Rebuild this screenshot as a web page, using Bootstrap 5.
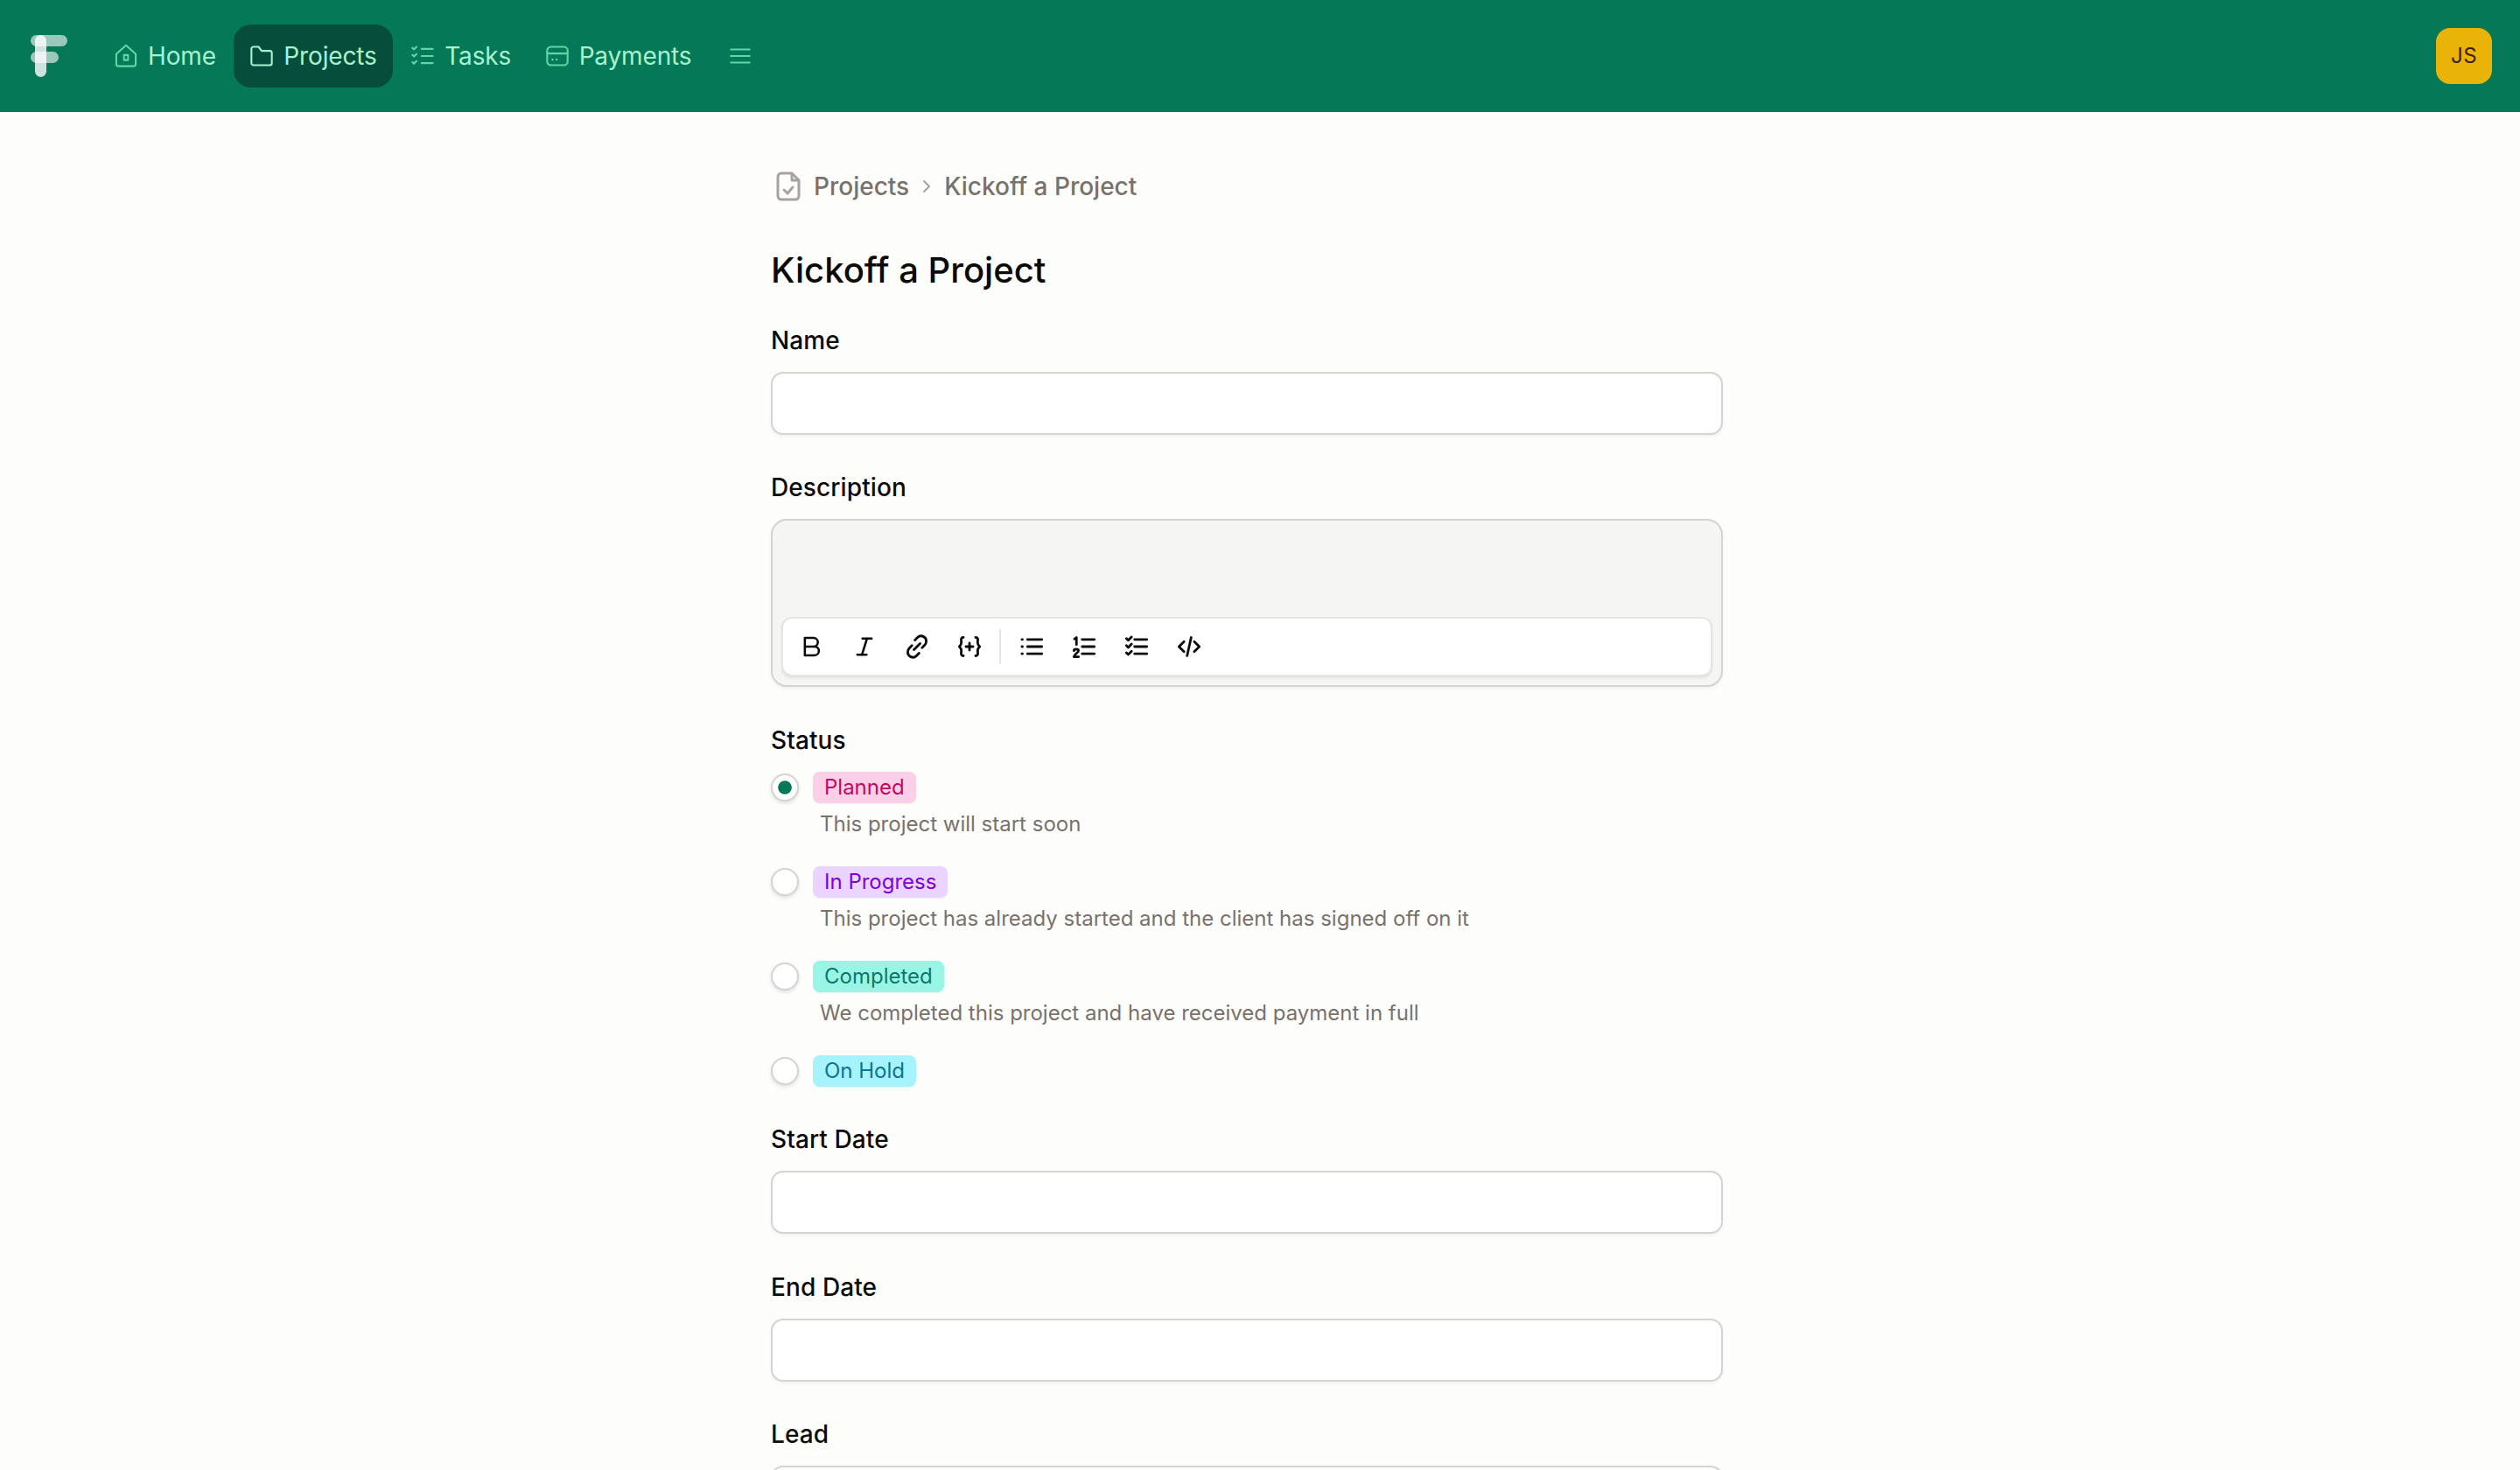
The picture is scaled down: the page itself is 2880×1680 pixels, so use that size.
<!DOCTYPE html>
<html lang="en">
<head>
<meta charset="utf-8">
<title>Kickoff a Project</title>
<link href="https://cdn.jsdelivr.net/npm/bootstrap@5.3.0/dist/css/bootstrap.min.css" rel="stylesheet">
<style>
html,body{height:1680px;overflow:hidden}
body{background:#fdfdfc;color:#0c0a09;font-family:Inter,"Liberation Sans",sans-serif;font-size:28px}
svg{display:block;flex:none;fill:none;stroke:currentColor;stroke-linecap:round;stroke-linejoin:round}
.top-bar{height:128px;background:#047857;padding:0 32px 0 35px}
.logo-mark{width:42px;height:48px;position:relative;margin-right:35px}
.logo-mark i{position:absolute;display:block;background:#fff;border-radius:7px}
.logo-a{left:0;top:0;width:42px;height:13px;opacity:.6}
.logo-b{left:0;top:19px;width:32px;height:13px;opacity:.6}
.logo-c{left:5px;top:0;width:13px;height:48px;opacity:.8}
.main-links{gap:2.5px}
.main-links .nav-link{height:72px;padding:0 18px;display:flex;align-items:center;gap:11px;color:#a7f3d0;font-size:28px;font-weight:400;border-radius:20px;letter-spacing:-.15px}
.main-links .nav-link svg{color:#6ee7b7;opacity:.85;width:28px;height:28px;stroke-width:1.8}
.main-links .nav-link.active{background:#064e3b;color:#a7f3d0}
.main-links .nav-link.active svg{color:#a7f3d0;opacity:1}
.menu-toggle{background:none;border:0;padding:0;margin-left:25px;color:#6ee7b7;opacity:.85}
.user-tile{width:64px;height:64px;background:#eab308;color:#422006;border-radius:16px;font-size:24px;letter-spacing:.5px}
.page-col{padding-right:30px}
.form-col{width:1088px;margin:0 auto;padding-top:65px}
.crumbs{height:40px;color:#78716c;margin-bottom:48px;font-size:28px;font-weight:450;padding-left:6px}
.crumbs .doc-ic{color:#a8a29e;margin-right:15px}
.crumbs .sep-ic{color:#a8a29e;margin:0 11px}
.page-title{font-size:40px;line-height:56px;font-weight:450;margin:0 0 32px}
.field-label{display:block;font-size:28px;line-height:40px;font-weight:450;margin:0 0 16px;letter-spacing:.1px}
.field-block{margin-bottom:40px}
.field-block.extra-gap{margin-bottom:41px}
.form-control.text-box{height:72px;border:2px solid #d6d3d1;border-radius:14px;background:#fff;box-shadow:0 2px 4px rgba(12,10,9,.05)}
.rich-box{height:192px;background:#f5f5f4;border:2px solid #d6d3d1;border-radius:18px;padding:0 10px 10px;display:flex;flex-direction:column;justify-content:flex-end;box-shadow:0 2px 4px rgba(12,10,9,.05)}
.tool-strip{height:68px;background:#fff;border:2px solid #e7e5e4;border-radius:12px;padding:0 0 0 3px;box-shadow:0 2px 3px rgba(12,10,9,.08);color:#0c0a09}
.tool-btn{width:60px;height:40px;padding:0;border:0;background:none;color:inherit;display:flex;align-items:center;justify-content:center}
.tool-sep{width:2px;height:40px;background:#e7e5e4;margin:0 5px 0 4px}
.status-row{display:flex;gap:16px;margin-bottom:28px}
.status-row:last-child{margin-bottom:0}
.status-row .form-check-input{width:32px;height:32px;margin:2px 0 0;flex:none;border:2px solid #d6d3d1;background-color:#fff;box-shadow:0 2px 4px rgba(12,10,9,.12)}
.status-row .form-check-input:checked{background-color:#fff;border-color:#d6d3d1;background-size:34px;background-position:center;background-image:url("data:image/svg+xml,%3csvg xmlns='http://www.w3.org/2000/svg' viewBox='-4 -4 8 8'%3e%3ccircle r='1.85' fill='%23047857'/%3e%3c/svg%3e")}
.status-tag{height:36px;line-height:36px;padding:0 13px;border-radius:8px;font-size:24px;font-weight:400;box-shadow:0 1px 2px rgba(12,10,9,.05)}
.tag-pink{background:#fbcfe8;color:#be0a62}
.tag-purple{background:#e9d5ff;color:#7e00d8}
.tag-teal{background:#99f6e4;color:#0f766e}
.tag-cyan{background:#a5f3fc;color:#0e7490}
.status-note{font-size:24px;line-height:40px;color:#78716c;margin:4px 0 0 8px}
</style>
</head>
<body>
<nav class="top-bar navbar d-flex align-items-center flex-nowrap">
  <div class="d-flex align-items-center">
    <div class="logo-mark"><i class="logo-a"></i><i class="logo-b"></i><i class="logo-c"></i></div>
    <ul class="nav main-links align-items-center">
      <li class="nav-item"><a class="nav-link" href="#"><svg viewBox="0 0 24 24"><path d="M12 1.500 2.500 10v10a2 2 0 0 0 2 2h15a2 2 0 0 0 2-2V10Z"/><rect x="10" y="11" width="4" height="5"/></svg>Home</a></li>
      <li class="nav-item"><a class="nav-link active" href="#"><svg viewBox="0 0 24 24"><path d="M2 19V5a2 2 0 0 1 2-2h5l3 4h8a2 2 0 0 1 2 2v10a2 2 0 0 1-2 2H4a2 2 0 0 1-2-2Z"/></svg>Projects</a></li>
      <li class="nav-item"><a class="nav-link" href="#"><svg viewBox="0 0 24 24"><path d="M11 5h11M11 12h11M11 19h11M2 4l1.500 1.500L6 3M2 11l1.500 1.500L6 10M2 18l1.500 1.500L6 17"/></svg>Tasks</a></li>
      <li class="nav-item"><a class="nav-link" href="#"><svg viewBox="0 0 24 24"><rect x="2" y="3" width="20" height="18" rx="3.500"/><path d="M2 9.500h20M7 15.500h.5M11 15.500h.5"/></svg>Payments</a></li>
    </ul>
    <button class="menu-toggle" type="button" aria-label="Menu"><svg width="26" height="26" viewBox="0 0 24 24" stroke-width="1.800"><path d="M2 5h20M2 12h20M2 19h20"/></svg></button>
  </div>
  <div class="user-tile d-flex align-items-center justify-content-center">JS</div>
</nav>
<div class="page-col">
  <main class="form-col">
    <div class="crumbs d-flex align-items-center">
      <svg class="doc-ic" width="28" height="34" viewBox="0 0 28 34" stroke-width="3"><path d="M18 2H6a4 4 0 0 0-4 4v22a4 4 0 0 0 4 4h16a4 4 0 0 0 4-4V10Z"/><path d="M18 3v7h7M9 21l4 4 6-7"/></svg>
      <span>Projects</span>
      <svg class="sep-ic" width="18" height="18" viewBox="0 0 18 18" stroke-width="2"><path d="m6 3 6 6-6 6"/></svg>
      <span>Kickoff a Project</span>
    </div>
    <h1 class="page-title">Kickoff a Project</h1>
    <div class="field-block">
      <label class="field-label" for="fName">Name</label>
      <input class="form-control text-box" id="fName" type="text">
    </div>
    <div class="field-block extra-gap">
      <label class="field-label">Description</label>
      <div class="rich-box">
        <div class="tool-strip d-flex align-items-center">
          <button class="tool-btn" type="button" aria-label="Bold"><svg width="28" height="28" viewBox="0 0 24 24" stroke-width="2.200"><path d="M5 3.500h8.500a4.250 4.250 0 0 1 0 8.500H5ZM5 12h9.500a4.250 4.250 0 0 1 0 8.500H5Z"/></svg></button>
          <button class="tool-btn" type="button" aria-label="Italic"><svg width="28" height="28" viewBox="0 0 24 24" stroke-width="2.200"><path d="M10 4h9M5 20h9M14.500 4l-5 16"/></svg></button>
          <button class="tool-btn" type="button" aria-label="Link"><svg width="28" height="28" viewBox="0 0 24 24" stroke-width="2.400"><path d="M10 5.500 12.500 3a5 5 0 0 1 8.500 4 5 5 0 0 1-1.500 3.500L17 13M14 18.500 11.500 21A5 5 0 0 1 3 17a5 5 0 0 1 1.500-3.500L7 11M9 15l6-6"/></svg></button>
          <button class="tool-btn" type="button" aria-label="Variable"><svg width="28" height="28" viewBox="0 0 24 24" stroke-width="2.400"><path d="M6 3c-3 0-2 2.500-2 5s-1 3-2 4c1 1 2 1.500 2 4s-1 5 2 5M18 3c3 0 2 2.500 2 5s1 3 2 4c-1 1-2 1.500-2 4s1 5-2 5M12 8.500v7M8.500 12h7"/></svg></button>
          <span class="tool-sep"></span>
          <button class="tool-btn" type="button" aria-label="Bullet list"><svg width="28" height="28" viewBox="0 0 24 24" stroke-width="2.400"><path d="M8 5h14M8 12h14M8 19h14M2.500 5h.5M2.500 12h.5M2.500 19h.5"/></svg></button>
          <button class="tool-btn" type="button" aria-label="Numbered list"><svg width="28" height="28" viewBox="0 0 24 24" stroke-width="2.400"><path d="M10 5h12M10 12h12M10 19h12M2.500 4.500 4.500 3v7M2 16c0-2 4.500-2 4.500 0 0 2-4 3-4.500 6h4.500"/></svg></button>
          <button class="tool-btn" type="button" aria-label="Task list"><svg width="28" height="28" viewBox="0 0 24 24" stroke-width="2.400"><path d="M10 5h12M10 12h12M10 19h12M2 4l1.800 1.800L7 2.500M2 11l1.800 1.800L7 9.500M2 18l1.800 1.800L7 16.500"/></svg></button>
          <button class="tool-btn" type="button" aria-label="Code"><svg width="28" height="28" viewBox="0 0 24 24" stroke-width="2.400"><path d="M7 7l-5 5 5 5M17 7l5 5-5 5M14 3l-4 18"/></svg></button>
        </div>
      </div>
    </div>
    <div class="field-block">
      <label class="field-label">Status</label>
      <div class="status-row">
        <input class="form-check-input" type="radio" name="st" checked aria-label="Planned">
        <div class="d-flex flex-column align-items-start"><span class="status-tag tag-pink">Planned</span><p class="status-note">This project will start soon</p></div>
      </div>
      <div class="status-row">
        <input class="form-check-input" type="radio" name="st" aria-label="In Progress">
        <div class="d-flex flex-column align-items-start"><span class="status-tag tag-purple">In Progress</span><p class="status-note">This project has already started and the client has signed off on it</p></div>
      </div>
      <div class="status-row">
        <input class="form-check-input" type="radio" name="st" aria-label="Completed">
        <div class="d-flex flex-column align-items-start"><span class="status-tag tag-teal">Completed</span><p class="status-note">We completed this project and have received payment in full</p></div>
      </div>
      <div class="status-row">
        <input class="form-check-input" type="radio" name="st" aria-label="On Hold">
        <div class="d-flex flex-column align-items-start"><span class="status-tag tag-cyan">On Hold</span></div>
      </div>
    </div>
    <div class="field-block extra-gap">
      <label class="field-label" for="fStart">Start Date</label>
      <input class="form-control text-box" id="fStart" type="text">
    </div>
    <div class="field-block">
      <label class="field-label" for="fEnd">End Date</label>
      <input class="form-control text-box" id="fEnd" type="text">
    </div>
    <div class="field-block">
      <label class="field-label" for="fLead">Lead</label>
      <input class="form-control text-box" id="fLead" type="text">
    </div>
  </main>
</div>
<script src="https://cdn.jsdelivr.net/npm/bootstrap@5.3.0/dist/js/bootstrap.bundle.min.js"></script>
</body>
</html>
